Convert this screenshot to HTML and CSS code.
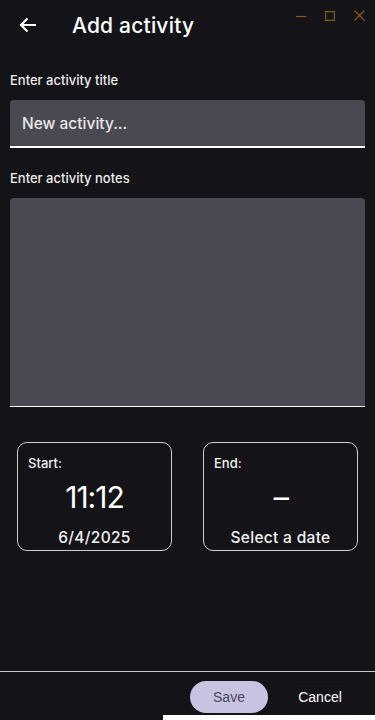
FILE: index.html
```html
<!DOCTYPE html>
<html>
<head>
<meta charset="utf-8">
<link rel="stylesheet" href="styles.css">
</head>
<body>
<div class="app">
  <header class="header">
    <svg class="back" width="18" height="16" viewBox="0 0 18 16"><path d="M17 8H2M8.5 1.5L2 8l6.5 6.5" fill="none" stroke="#fff" stroke-width="2.2"/></svg>
    <h1 class="title">Add activity</h1>
    <div class="winctl">
      <svg width="10" height="10" viewBox="0 0 10 10"><path d="M0 5.5h10" stroke="#8a5a12" stroke-width="1.2"/></svg>
      <svg width="10" height="10" viewBox="0 0 10 10"><rect x="0.6" y="0.6" width="8.8" height="8.8" fill="none" stroke="#8a5a12" stroke-width="1.2"/></svg>
      <svg width="11" height="11" viewBox="0 0 11 11"><path d="M0.5 0.5l10 10M10.5 0.5l-10 10" stroke="#8a5a12" stroke-width="1.2"/></svg>
    </div>
  </header>
  <main class="content">
    <label class="label">Enter activity title</label>
    <div class="input">New activity...</div>
    <label class="label notes-label">Enter activity notes</label>
    <div class="textarea"></div>
    <div class="cards">
      <div class="card">
        <div class="card-label">Start:</div>
        <div class="card-time">11:12</div>
        <div class="card-date">6/4/2025</div>
      </div>
      <div class="card">
        <div class="card-label">End:</div>
        <div class="card-time dash">-</div>
        <div class="card-date">Select a date</div>
      </div>
    </div>
  </main>
  <footer class="footer">
    <button class="btn save">Save</button>
    <button class="btn cancel">Cancel</button>
  </footer>
  <div class="strip-row"><div class="strip"></div></div>
</div>
</body>
</html>
```
FILE: styles.css
```css
html, body {
  margin: 0;
  padding: 0;
  background: #141318;
}
body {
  font-family: Inter, "Noto Sans", sans-serif;
  color: #ffffff;
}
.app {
  width: 375px;
  height: 720px;
  display: flex;
  flex-direction: column;
  overflow: hidden;
}
.header {
  height: 50px;
  display: flex;
  align-items: center;
  position: relative;
}
.back {
  margin-left: 19px;
}
.title {
  margin: 0 0 0 35px;
  font-size: 21px;
  font-weight: 500;
  letter-spacing: 0.2px;
  color: #ffffff;
}
.winctl {
  position: absolute;
  top: 10px;
  right: 10px;
  display: flex;
  gap: 19px;
  align-items: center;
}
.content {
  flex: 1;
  display: flex;
  flex-direction: column;
  padding: 0 10px;
}
.label {
  font-size: 13px;
  font-weight: 500;
  color: #ececec;
  margin-top: 22px;
  line-height: 16px;
}
.input {
  margin-top: 12px;
  height: 46px;
  background: #4a4951;
  border-radius: 4px 4px 0 0;
  border-bottom: 2px solid #ffffff;
  padding: 0 12px;
  display: flex;
  align-items: center;
  font-size: 15.5px;
  font-weight: 500;
  color: #e8e8e8;
}
.textarea {
  margin-top: 12px;
  height: 208px;
  background: #4a4951;
  border-radius: 4px 4px 0 0;
  border-bottom: 1px solid #ffffff;
}
.cards {
  margin-top: 35px;
  display: flex;
  justify-content: space-between;
  padding: 0 7px;
}
.card {
  width: 153px;
  height: 107px;
  border: 1px solid #cfcfcf;
  border-radius: 10px;
  display: flex;
  flex-direction: column;
  align-items: center;
}
.card-label {
  align-self: flex-start;
  margin: 12px 0 0 10px;
  font-size: 13px;
  font-weight: 500;
  line-height: 16px;
  color: #f2f2f2;
}
.card-time {
  margin-top: 9px;
  font-size: 30px;
  line-height: 34px;
  letter-spacing: -1px;
  color: #ffffff;
}
.dash {
  transform: scaleX(1.6);
}
.card-date {
  margin-top: 15px;
  font-size: 15.5px;
  font-weight: 500;
  line-height: 18px;
  letter-spacing: 0.3px;
  color: #f2f2f2;
}
.footer {
  border-top: 1px solid #c8c8c8;
  height: 43px;
  display: flex;
  justify-content: flex-end;
  align-items: flex-end;
  padding-right: 8px;
  gap: 5px;
}
.btn {
  font-family: "Liberation Sans", Arial, sans-serif;
  font-size: 14px;
  height: 32px;
  border-radius: 16px;
  border: none;
  margin-bottom: 2px;
}
.save {
  width: 78px;
  background: #c6c4e0;
  color: #4a4857;
}
.cancel {
  width: 94px;
  background: #141318;
  color: #ffffff;
  border: 1px solid #18171c;
}
.strip-row {
  height: 5px;
  display: flex;
  justify-content: flex-end;
}
.strip {
  width: 212px;
  height: 5px;
  background: #ffffff;
}
```
